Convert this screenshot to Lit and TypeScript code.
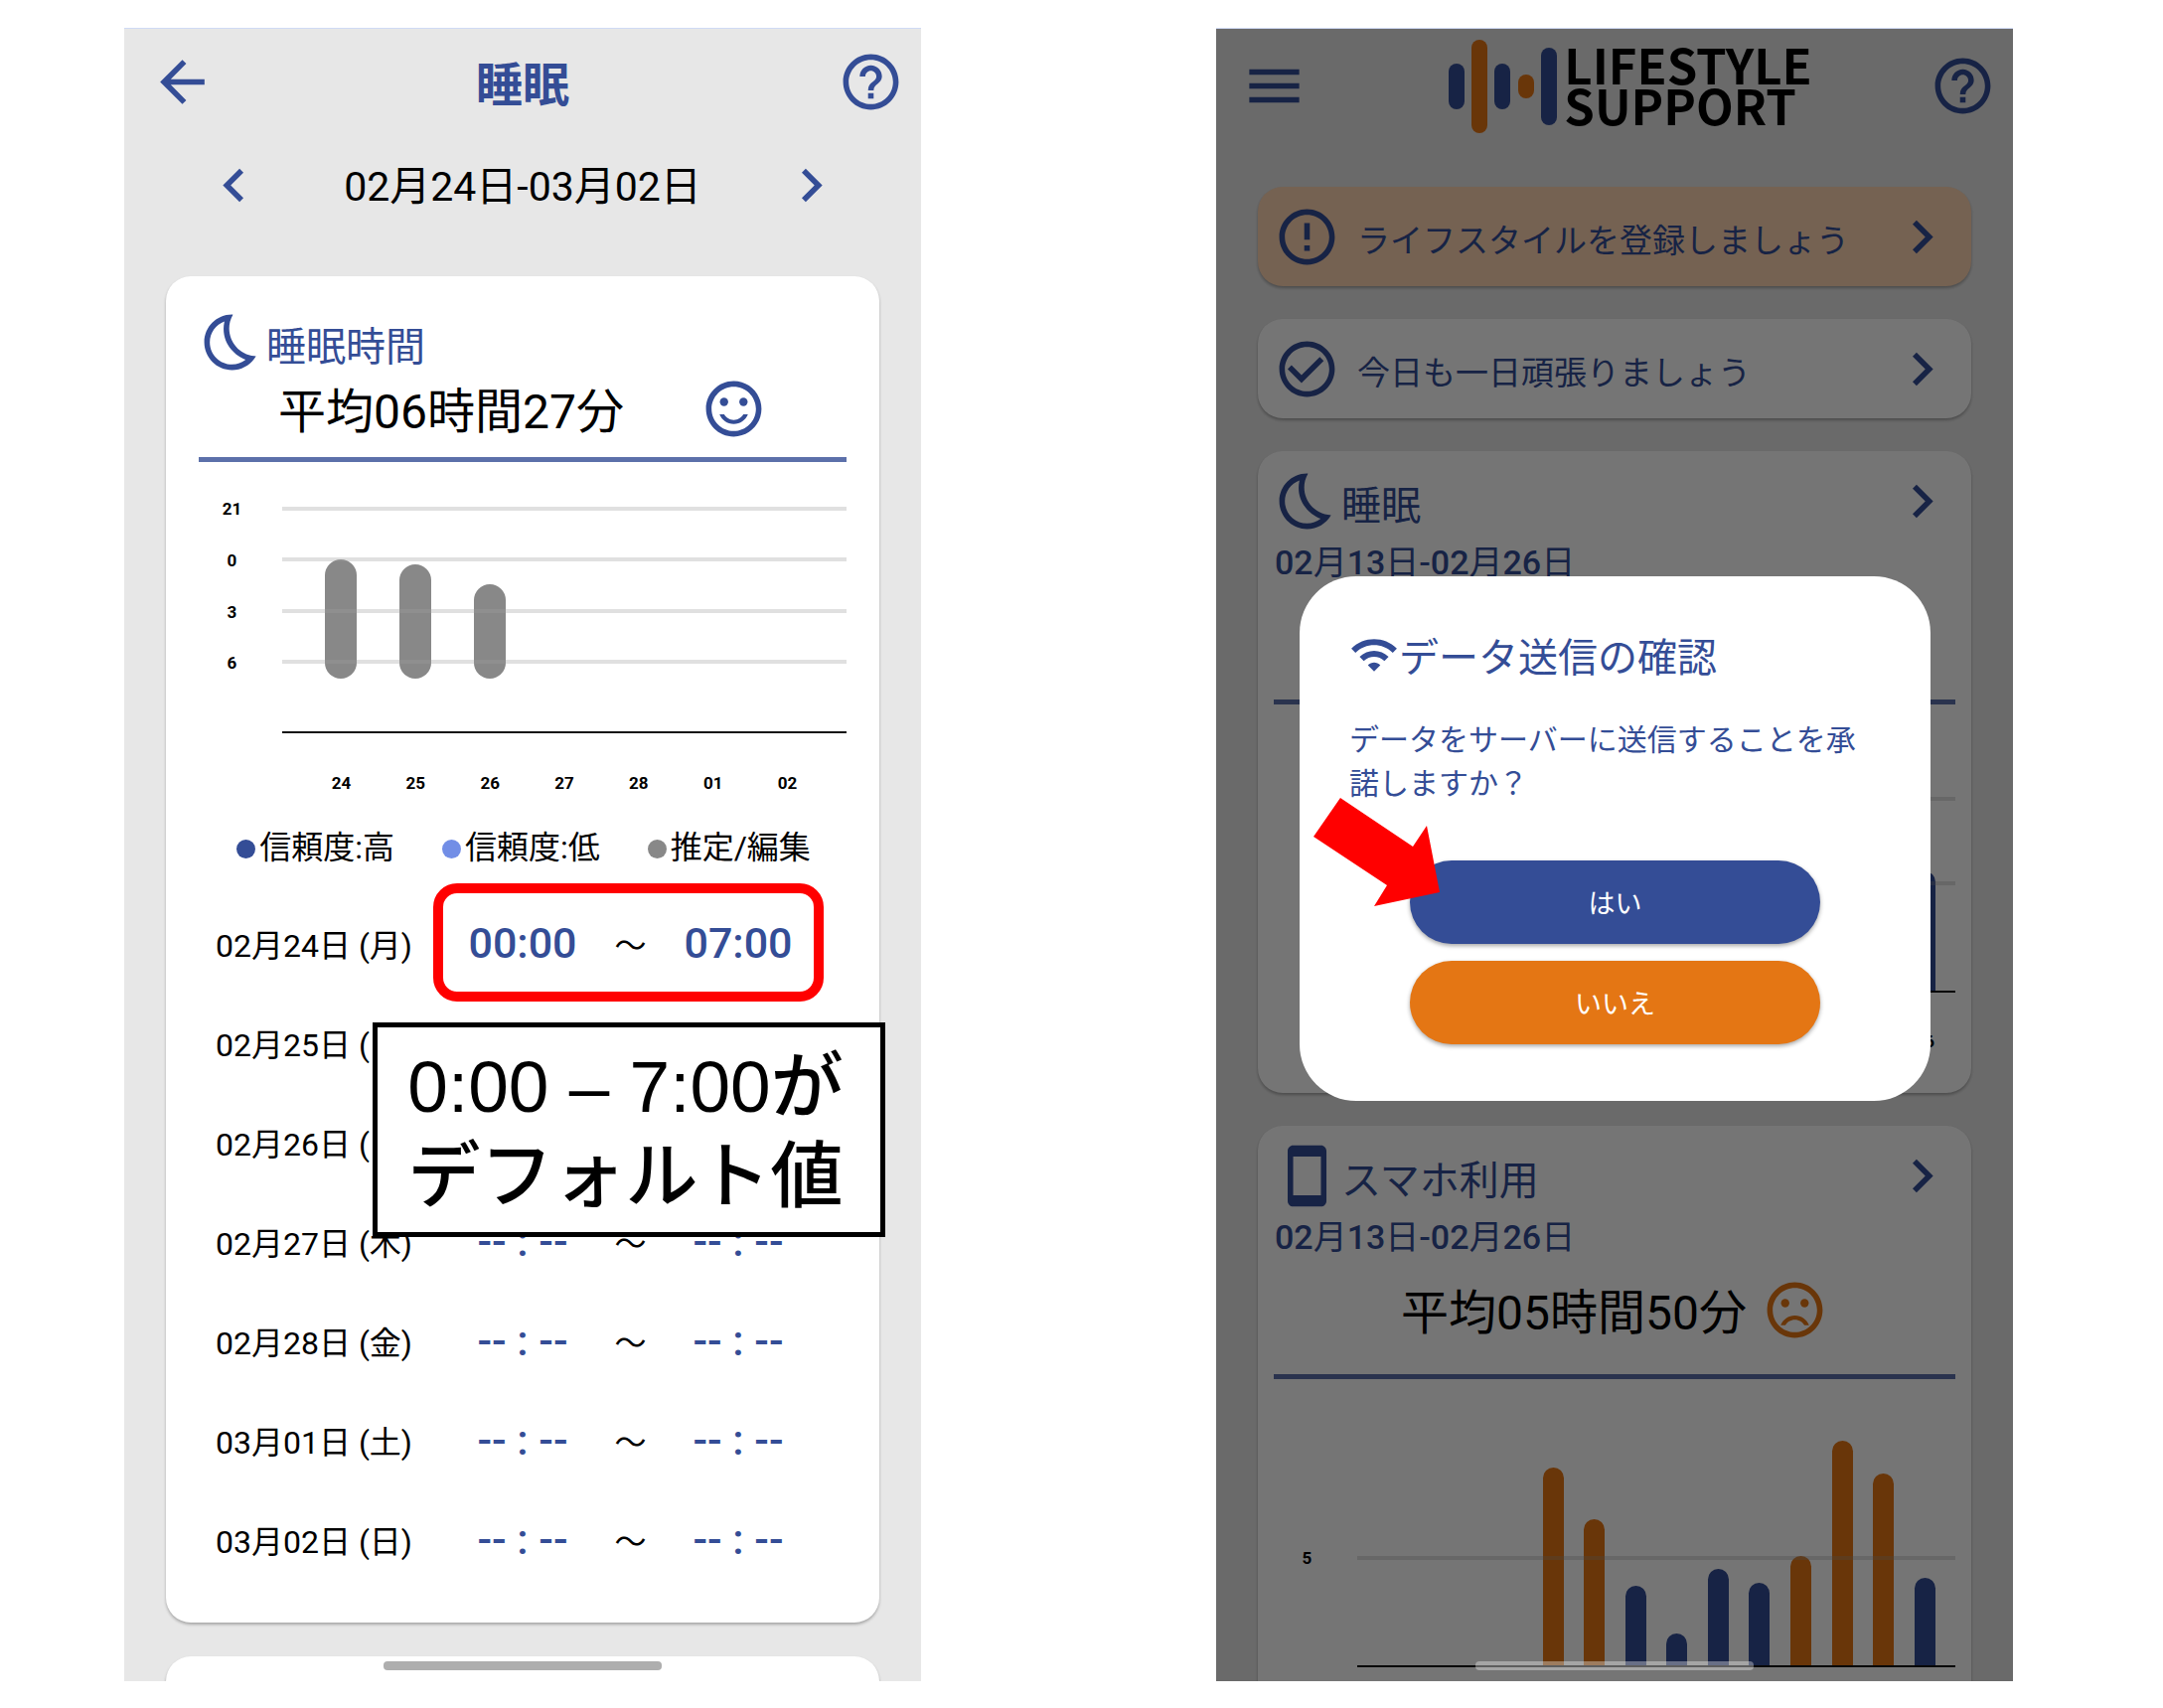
import { LitElement, html, css, svg, nothing } from "lit";
import { customElement, property } from "lit/decorators.js";

/* 24-unit icon outlines */
const ICONS: Record<string, string> = {
  back: "M20 11H7.83l5.59-5.59L12 4l-8 8 8 8 1.41-1.41L7.83 13H20v-2z",
  menu: "M3 18h18v-2H3v2zm0-5h18v-2H3v2zm0-7v2h18V6H3z",
  help: "M11 18h2v-2h-2v2zm1-16C6.48 2 2 6.48 2 12s4.48 10 10 10 10-4.48 10-10S17.52 2 12 2zm0 18c-4.41 0-8-3.59-8-8s3.59-8 8-8 8 3.59 8 8-3.59 8-8 8zm0-14c-2.21 0-4 1.79-4 4h2c0-1.1.9-2 2-2s2 .9 2 2c0 2-3 1.75-3 5h2c0-2.25 3-2.5 3-5 0-2.21-1.79-4-4-4z",
  left: "M15.41 7.41L14 6l-6 6 6 6 1.41-1.41L10.83 12z",
  right: "M10 6L8.59 7.41 13.17 12l-4.58 4.59L10 18l6-6z",
  moon: "M9.27 4.49c-1.63 7.54 3.75 12.41 7.66 13.8C15.54 19.38 13.81 20 12 20c-4.41 0-8-3.59-8-8 0-3.45 2.2-6.4 5.27-7.51M11.99 2.01C6.4 2.01 2 6.54 2 12c0 5.52 4.48 10 10 10 3.71 0 6.93-2.02 8.66-5.02C13.15 16.73 8.57 8.55 12.33 2.02c-.11-.01-.23-.01-.34-.01z",
  alert: "M11 15h2v2h-2zm0-8h2v6h-2zm.99-5C6.47 2 2 6.48 2 12s4.47 10 9.99 10C17.52 22 22 17.52 22 12S17.52 2 11.99 2zM12 20c-4.42 0-8-3.58-8-8s3.58-8 8-8 8 3.58 8 8-3.58 8-8 8z",
  check: "M16.59 7.58L10 14.17l-3.59-3.58L5 12l5 5 8-8zM12 2C6.48 2 2 6.48 2 12s4.48 10 10 10 10-4.48 10-10S17.52 2 12 2zm0 18c-4.42 0-8-3.58-8-8s3.58-8 8-8 8 3.58 8 8-3.58 8-8 8z",
  phone: "M17 1.01L7 1c-1.1 0-1.99.9-1.99 2v18c0 1.1.89 2 1.99 2h10c1.1 0 2-.9 2-2V3c0-1.1-.9-1.99-2-1.99zM17 19H7V5h10v14z",
  wifi: "M1 9l2 2c4.97-4.97 13.03-4.97 18 0l2-2C16.93 2.93 7.08 2.93 1 9zm8 8l3 3 3-3c-1.65-1.66-4.34-1.66-6 0zm-4-4l2 2c2.76-2.76 7.24-2.76 10 0l2-2C15.14 9.14 8.87 9.14 5 13z",
};
const RING = "M11.99 2C6.47 2 2 6.48 2 12s4.47 10 9.99 10C17.52 22 22 17.52 22 12S17.52 2 11.99 2zM12 20c-4.42 0-8-3.58-8-8s3.58-8 8-8 8 3.58 8 8-3.58 8-8 8z";
const MOUTHS: Record<string, string> = {
  smile: "M12 16c-1.48 0-2.75-.81-3.45-2H6.88c.8 2.05 2.79 3.5 5.12 3.5s4.32-1.45 5.12-3.5h-1.67c-.7 1.19-1.97 2-3.45 2z",
  sad: "M12 14c-2.33 0-4.32 1.45-5.12 3.5h1.67c.69-1.19 1.97-2 3.45-2s2.75.81 3.45 2h1.67c-.8-2.05-2.79-3.5-5.12-3.5z",
};

@customElement("app-icon")
export class AppIcon extends LitElement {
  @property() name = "";
  static styles = css`
    :host { display: block; flex: none; width: 67px; height: 67px; }
    svg { display: block; width: 100%; height: 100%; fill: currentColor; }
  `;
  render() {
    const mouth = MOUTHS[this.name];
    return html`<svg viewBox="0 0 24 24" aria-hidden="true">
      ${mouth
        ? svg`<path d=${RING}></path><path d=${mouth}></path>
            <circle cx="8.5" cy="9.5" r="1.5"></circle><circle cx="15.5" cy="9.5" r="1.5"></circle>`
        : svg`<path fill-rule="evenodd" d=${ICONS[this.name] ?? ""}></path>`}
    </svg>`;
  }
}

const base = css`
  * { box-sizing: border-box; }
  :host {
    --blue: #344d96;
    --orange: #e47614;
    font-family: Roboto, "Noto Sans CJK JP", sans-serif;
    color: #000;
  }
  button {
    font: inherit; color: inherit; background: none; border: 0; padding: 0; margin: 0;
    cursor: pointer;
  }
  a { color: inherit; text-decoration: none; }
  h1, h2, p { margin: 0; font-weight: 400; }
  .screen {
    position: relative; display: flex; flex-direction: column; height: 100%;
    background: #e7e7e7; border-top: 1px solid #d0daf4; overflow: hidden;
  }
  .bar {
    display: grid; grid-template-columns: 1fr auto 1fr; align-items: center;
    padding: 0 17px 0 25px; color: var(--blue);
  }
  .bar > :last-child { justify-self: end; }
  .bar > :first-child { justify-self: start; }
  .blue { color: var(--blue); }
  .card {
    margin: 0 42px; background: #fff; border-radius: 25px;
    box-shadow: 0 2px 3px rgba(0, 0, 0, 0.28);
  }
  .card.cut { flex: 1; min-height: 25px; border-radius: 25px 25px 0 0; }
  .card-title { display: flex; align-items: center; color: var(--blue); }
  .card-title h2 { flex: 1; font-size: 40px; line-height: 57px; padding: 10px 0 0 1px; }
  .rule { height: 5px; margin: 0; border: 0; background: #5c70aa; }
  .average { display: flex; align-items: center; min-height: 67px; font-size: 48px; line-height: 61px; }
  .average span { padding-top: 6px; }
  .tick { font-size: 17px; line-height: 24px; font-weight: 700; text-align: center; }
  .plot { position: relative; border-bottom: 2px solid #111; }
  .line { position: absolute; left: 0; right: 0; height: 4px; margin-top: -2px; background: rgba(160, 160, 160, 0.32); }
  .home {
    position: absolute; left: 0; right: 0; bottom: 11px; margin: auto;
    width: 35%; height: 9px; border-radius: 4px; background: #aeaeae;
  }
`;

interface Night { day: string; label: string; from?: string; to?: string; start?: number; end?: number }

const AXIS_HOURS = 13.1;
const BLANK = "-- : --";
const NIGHTS: Night[] = [
  { day: "24", label: "02月24日 (月)", from: "00:00", to: "07:00", start: 3, end: 10 },
  { day: "25", label: "02月25日 (", start: 3.25, end: 10 },
  { day: "26", label: "02月26日 (", start: 4.45, end: 10 },
  { day: "27", label: "02月27日 (木)", from: BLANK, to: BLANK },
  { day: "28", label: "02月28日 (金)", from: BLANK, to: BLANK },
  { day: "01", label: "03月01日 (土)", from: BLANK, to: BLANK },
  { day: "02", label: "03月02日 (日)", from: BLANK, to: BLANK },
];
const LEGEND = [
  { text: "信頼度:高", tone: "high" },
  { text: "信頼度:低", tone: "low" },
  { text: "推定/編集", tone: "edited" },
];

@customElement("sleep-screen")
export class SleepScreen extends LitElement {
  static styles = [base, css`
    :host { display: block; min-width: 0; position: relative; }
    .bar { height: 106px; }
    .bar h1 { font-size: 47px; line-height: 64px; font-weight: 700; padding: 7px 8px 0 0; }
    .period { display: flex; align-items: center; justify-content: space-between; height: 103px; padding: 0 77px; margin-bottom: 40px; }
    .period p { font-size: 41px; line-height: 60px; padding-top: 2px; }
    .detail { padding: 33px; margin-bottom: 34px; }
    .average { padding-left: 80px; gap: 77px; margin-bottom: 15px; }
    .chart { display: grid; grid-template-columns: 67px 1fr; column-gap: 17px; margin-top: 47px; }
    .scale { position: relative; }
    .scale .tick { position: absolute; left: 0; right: 0; margin-top: -12px; }
    .plot { height: 226px; }
    .columns { display: grid; grid-template-columns: repeat(7, 1fr); padding: 0 22px; height: 100%; }
    .slot { position: relative; }
    .night { position: absolute; left: 0; right: 0; margin: auto; width: 32px; border-radius: 16px; background: #888; }
    .days { grid-column: 2; height: auto; margin-top: 38px; }
    .legend { display: flex; justify-content: center; gap: 48px; margin: 29px 0 23px; padding: 0 0 0 2px; list-style: none; font-size: 32px; line-height: 48px; }
    .legend li { display: flex; align-items: center; gap: 4px; white-space: nowrap; }
    .dot { width: 19px; height: 19px; border-radius: 50%; margin-top: 2px; }
    .high { background: var(--blue); }
    .low { background: #728ee6; }
    .edited { background: #888; }
    table { width: 100%; table-layout: fixed; border-collapse: collapse; }
    th, td { height: 100px; padding: 0 0 2px; text-align: center; font-weight: 400; font-size: 32px; }
    th { text-align: left; padding-left: 17px; white-space: nowrap; }
    .c-time { width: 150px; }
    .c-to { width: 67px; }
    .c-end { width: 34px; }
    .time { display: block; width: 100%; height: 60px; font-size: 43px; line-height: 60px; font-weight: 500; color: var(--blue); white-space: nowrap; }
    .mark { position: absolute; left: 311px; right: 98px; top: 861px; height: 119px; border: 10px solid #f00; border-radius: 24px; }
    .callout {
      position: absolute; left: 250px; right: 36px; top: 1001px; height: 216px;
      display: grid; place-content: center; text-align: center; padding: 4px 7px 0 0;
      border: 5px solid #000; background: #fff;
      font-family: "Liberation Sans", "Noto Sans CJK JP", sans-serif; font-size: 73px; line-height: 90px; white-space: nowrap;
    }
    .callout .kana { font-weight: 500; }
  `];
  render() {
    return html`
      <section class="screen">
        <header class="bar">
          <button aria-label="戻る"><app-icon name="back"></app-icon></button>
          <h1>睡眠</h1>
          <button aria-label="ヘルプ"><app-icon name="help"></app-icon></button>
        </header>
        <nav class="period">
          <button class="blue" aria-label="前の週"><app-icon name="left"></app-icon></button>
          <p>02月24日-03月02日</p>
          <button class="blue" aria-label="次の週"><app-icon name="right"></app-icon></button>
        </nav>
        <article class="card detail">
          <div class="card-title"><app-icon name="moon"></app-icon><h2>睡眠時間</h2></div>
          <div class="average"><span>平均06時間27分</span><app-icon class="blue" name="smile"></app-icon></div>
          <hr class="rule" />
          <div class="chart">
            <div class="scale">
              ${["21", "0", "3", "6"].map((t, i) => html`<span class="tick" style="top:${(i * 300) / AXIS_HOURS}%">${t}</span>`)}
            </div>
            <div class="plot">
              <div class="columns">
                ${NIGHTS.map((n) => html`<div class="slot">${n.start === undefined ? nothing : html`<div class="night"
                  style="top:${(n.start / AXIS_HOURS) * 100}%;bottom:${100 - (n.end! / AXIS_HOURS) * 100}%"></div>`}</div>`)}
              </div>
              ${[0, 1, 2, 3].map((i) => html`<div class="line" style="top:${(i * 300) / AXIS_HOURS}%"></div>`)}
            </div>
            <div class="columns days">${NIGHTS.map((n) => html`<span class="tick">${n.day}</span>`)}</div>
          </div>
          <ul class="legend">
            ${LEGEND.map((l) => html`<li><span class="dot ${l.tone}"></span>${l.text}</li>`)}
          </ul>
          <table>
            <colgroup><col /><col class="c-time" /><col class="c-to" /><col class="c-time" /><col class="c-end" /></colgroup>
            <tbody>
              ${NIGHTS.map((n) => html`<tr>
                <th scope="row">${n.label}</th>
                <td>${n.from ? html`<button class="time">${n.from}</button>` : nothing}</td>
                <td>${n.from ? "～" : nothing}</td>
                <td>${n.to ? html`<button class="time">${n.to}</button>` : nothing}</td>
                <td></td>
              </tr>`)}
            </tbody>
          </table>
        </article>
        <div class="card cut"></div>
        <div class="home"></div>
      </section>
      <div class="mark"></div>
      <div class="callout"><span>0:00 – 7:00<span class="kana">が</span></span><span class="kana">デフォルト値</span></div>
    `;
  }
}

const PHONE_USE = [0, 0, 0, 0, 199, 147, 80, 32, 97, 83, 110, 226, 193, 88];
const LIMIT = 110;
const LOGO = [
  { x: 0, y: 24, h: 46, c: "#344d96" },
  { x: 23, y: 0, h: 94, c: "#e47614" },
  { x: 46, y: 24, h: 46, c: "#344d96" },
  { x: 70, y: 35, h: 24, c: "#e47614" },
  { x: 93, y: 8, h: 78, c: "#344d96" },
];

@customElement("home-screen")
export class HomeScreen extends LitElement {
  static styles = [base, css`
    :host { display: block; min-width: 0; }
    .bar { height: 115px; margin-bottom: 44px; }
    .logo { display: flex; align-items: center; gap: 7px; color: #000; padding-left: 24px; }
    .logo svg { display: block; width: 109px; height: 94px; }
    .wordmark { font-family: "Noto Sans CJK JP", sans-serif; font-weight: 700; font-size: 49px; line-height: 41px; padding-bottom: 5px; }
    .wordmark span { display: block; }
    .notice { display: flex; align-items: center; height: 100px; padding: 0 16px; margin-bottom: 33px; color: var(--blue); }
    .notice span { flex: 1; padding: 9px 0 0 17px; font-size: 33px; line-height: 48px; white-space: nowrap; }
    .notice.warn { background: #ffd5b2; }
    .summary { padding: 17px 16px 0; }
    .summary.whole { padding-bottom: 40px; margin-bottom: 33px; }
    .range { margin-top: 6px; font-size: 34px; line-height: 44px; padding-left: 1px; color: var(--blue); }
    .range b { font-weight: 500; }
    .average { justify-content: center; gap: 15px; margin: 18px 0 31px; }
    .sad { color: var(--orange); }
    .chart { display: grid; grid-template-columns: 67px 1fr; column-gap: 17px; }
    .scale { position: relative; }
    .scale .tick { position: absolute; left: 0; right: 0; margin-bottom: -12px; }
    .plot { height: 290px; }
    .line { margin: 0 0 -2px; }
    .columns { display: grid; grid-template-columns: repeat(14, 1fr); justify-items: center; align-items: end; height: 100%; padding: 0 10px; }
    .use { width: 21px; border-radius: 11px 11px 0 0; background: var(--blue); }
    .use.over { background: var(--orange); }
    .days { grid-column: 2; height: auto; margin-top: 37px; }
    .last { grid-column: 14; }
    .home { background: rgba(255, 255, 255, 0.35); }
    .shade { position: absolute; inset: 0; display: grid; place-items: center; padding: 0 83px 33px 84px; background: rgba(0, 0, 0, 0.54); }
    .dialog { position: relative; width: 100%; padding: 46px 50px 57px; background: #fff; border-radius: 57px; color: var(--blue); }
    .dialog h2 { display: flex; align-items: center; height: 66px; font-size: 40px; line-height: 58px; white-space: nowrap; }
    .dialog h2 span { padding-top: 8px; }
    .dialog app-icon { width: 50px; height: 50px; }
    .dialog p { margin: 31px 0 55px; font-size: 30px; line-height: 44px; }
    .choices { display: flex; flex-direction: column; gap: 17px; margin: 0 61px; }
    .choice { height: 84px; border-radius: 42px; background: var(--blue); color: #fff; font-size: 27px; line-height: 40px; padding-top: 4px; box-shadow: 0 2px 4px rgba(0, 0, 0, 0.35); }
    .choice.no { background: var(--orange); }
    .pointer { position: absolute; left: 14px; top: 223px; width: 127px; height: 109px; fill: #f00; }
  `];
  private usage(values: number[], lines: number[], tick?: string, day?: string) {
    return html`<div class="chart">
      <div class="scale">${tick ? html`<span class="tick" style="bottom:${LIMIT}px">${tick}</span>` : nothing}</div>
      <div class="plot">
        <div class="columns">
          ${values.map((v, i) => html`<div class="use ${tick && v >= LIMIT ? "over" : ""}" style="height:${v}px;grid-column:${i + 15 - values.length}"></div>`)}
        </div>
        ${lines.map((l) => html`<div class="line" style="bottom:${l}px"></div>`)}
      </div>
      ${day ? html`<div class="columns days"><span class="tick last">${day}</span></div>` : nothing}
    </div>`;
  }
  /* Digits are set heavier than the date characters between them. */
  private range(text: string) {
    return html`<p class="range">${text.split(/([\d-]+)/).map((part) => (/\d/.test(part) ? html`<b>${part}</b>` : part))}</p>`;
  }
  render() {
    return html`
      <section class="screen">
        <header class="bar">
          <button aria-label="メニュー"><app-icon name="menu"></app-icon></button>
          <div class="logo">
            <svg viewBox="0 0 109 94" aria-hidden="true">
              ${LOGO.map((b) => svg`<rect x=${b.x} y=${b.y} width="16" height=${b.h} rx="8" fill=${b.c}></rect>`)}
            </svg>
            <div class="wordmark"><span>LIFESTYLE</span><span>SUPPORT</span></div>
          </div>
          <button aria-label="ヘルプ"><app-icon name="help"></app-icon></button>
        </header>
        <a class="card notice warn" href="#lifestyle"><app-icon name="alert"></app-icon><span>ライフスタイルを登録しましょう</span><app-icon name="right"></app-icon></a>
        <a class="card notice" href="#today"><app-icon name="check"></app-icon><span>今日も一日頑張りましょう</span><app-icon name="right"></app-icon></a>
        <article class="card summary whole">
          <a class="card-title" href="#sleep"><app-icon name="moon"></app-icon><h2>睡眠</h2><app-icon name="right"></app-icon></a>
          ${this.range("02月13日-02月26日")}
          <div class="average"></div>
          <hr class="rule" />
          ${this.usage([120], [LIMIT - 2, 193], undefined, "26")}
        </article>
        <article class="card summary cut">
          <a class="card-title" href="#phone"><app-icon name="phone"></app-icon><h2>スマホ利用</h2><app-icon name="right"></app-icon></a>
          ${this.range("02月13日-02月26日")}
          <div class="average"><span>平均05時間50分</span><app-icon class="sad" name="sad"></app-icon></div>
          <hr class="rule" />
          ${this.usage(PHONE_USE, [LIMIT - 2], "5")}
        </article>
        <div class="shade">
          <div class="dialog" role="dialog" aria-labelledby="send-title">
            <h2 id="send-title"><app-icon name="wifi"></app-icon><span>データ送信の確認</span></h2>
            <p>データをサーバーに送信することを承諾しますか？</p>
            <div class="choices">
              <button class="choice">はい</button>
              <button class="choice no">いいえ</button>
            </div>
            <svg class="pointer" viewBox="0 0 127 109" aria-hidden="true">
              <polygon points="27,0 100,49 114,28 127,95 61,109 74,88 0,39"></polygon>
            </svg>
          </div>
        </div>
        <div class="home"></div>
      </section>
    `;
  }
}

@customElement("app-root")
export class AppRoot extends LitElement {
  static styles = css`
    :host { display: block; background: #fff; }
    .stage {
      display: grid; grid-template-columns: 1fr 1fr; column-gap: 297px;
      padding: 28px 151px 27px 125px; box-sizing: border-box;
    }
    @media (max-width: 1900px) {
      .stage { column-gap: 60px; padding: 28px; }
    }
  `;
  render() {
    return html`<main class="stage"><sleep-screen></sleep-screen><home-screen></home-screen></main>`;
  }
}
